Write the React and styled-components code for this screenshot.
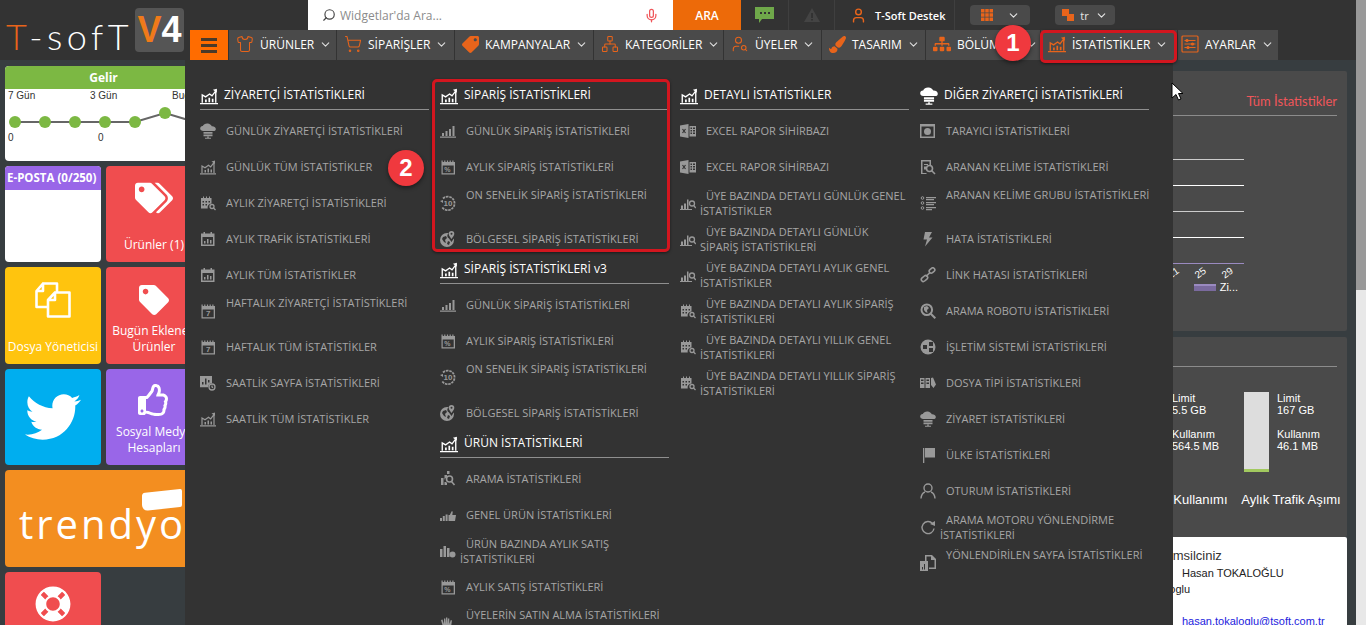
import styled, { createGlobalStyle } from 'styled-components';
import { ChevronDown, Mic, Network, Search, Shirt, ShoppingCart, User, UserSearch } from 'lucide-react';
import { FaLifeRing, FaPaintBrush, FaRegThumbsUp, FaSitemap, FaTag, FaTags, FaTwitter } from 'react-icons/fa';

const Global = createGlobalStyle`
    html, body { margin:0; padding:0; height:100%; overflow:hidden; background:#373d40; }
    body { font-family:"Open Sans", sans-serif; }
    * { box-sizing:border-box; }
`

const Page = styled.div`
    position:relative;
    display:flex;
    width:1366px;
    height:625px;
    overflow:hidden;
`
const Content = styled.div`
    flex:1;
    min-width:0;
    display:flex;
    flex-direction:column;
`
const Scrollbar = styled.div`
    width:10px;
    background:#e8e8e8;
`
const Thumb = styled.div`
    height:290px;
    background:#999;
`

/* header */
const Header = styled.header`
    display:flex;
    height:60px;
    background:#333;
`
const Logo = styled.div`
    width:190px;
    display:flex;
    align-items:center;
    padding:0 0 0 6px;
    gap:5px;
`
const LogoText = styled.span`
    width:124px;
    margin-top:12px;
    font:300 36px/1 Lato, "Open Sans", sans-serif;
    color:#fff;
    letter-spacing:4.5px;
    white-space:nowrap;
    b { font-weight:300; color:#e8641b; }
`
const Version = styled.span`
    width:49px;
    height:44px;
    border-radius:4px;
    background:#555;
    display:flex;
    align-items:center;
    justify-content:center;
    font:700 36px/1 "Liberation Sans", sans-serif;
    color:#fff;
    b { color:#f07a1a; }
`
const HeaderRight = styled.div`
    flex:1;
    display:flex;
    flex-direction:column;
`
const TopBar = styled.div`
    height:30px;
    display:flex;
    align-items:stretch;
    padding-left:118px;
`
const SearchBox = styled.div`
    width:365px;
    background:#fff;
    display:flex;
    align-items:center;
    padding:0 14px 0 14px;
    gap:4px;
    color:#444;
`
const Placeholder = styled.span`
    flex:1;
    font-size:12px;
    color:#8b8b8b;
`
const SearchButton = styled.div`
    width:68px;
    background:#ed6a09;
    color:#fff;
    font-size:12px;
    font-weight:600;
    display:flex;
    align-items:center;
    justify-content:center;
`
const TopCell = styled.div`
    width:${p => p.$w}px;
    border-right:1px solid #3f3f3f;
    display:flex;
    align-items:center;
    justify-content:${p => (p.$pl ? 'flex-start' : 'center')};
    padding-left:${p => p.$pl || 0}px;
    gap:8px;
    color:#fff;
    font-size:11px;
    font-weight:600;
    svg { flex:none; }
`
const TopButton = styled.div`
    width:60px;
    height:20px;
    margin:5px 0 0 ${p => p.$ml}px;
    background:#4a4a4a;
    border-radius:4px;
    display:flex;
    align-items:center;
    justify-content:center;
    gap:${p => p.$gap}px;
    color:#e6e6e6;
    font-size:11px;
`
const Nav = styled.nav`
    height:30px;
    display:flex;
`
const Burger = styled.div`
    width:38px;
    background:#ff6c00;
    display:flex;
    flex-direction:column;
    align-items:center;
    justify-content:center;
    gap:3px;
    i { display:block; width:16px; height:3px; background:#4a3a2a; }
`
const NavItem = styled.div`
    width:${p => p.$w}px;
    flex:none;
    background:#4a4a4a;
    border-left:1px solid #333;
    display:flex;
    align-items:center;
    padding:0 0 2px ${p => p.$pad || 7}px;
    gap:6px;
    color:#fff;
    font-size:12px;
    font-weight:400;
    white-space:nowrap;
    > svg:first-child { color:#e8641b; flex:none; }
    > svg:last-child { color:#ddd; flex:none; margin-left:-1px; }
`
const NavChart = styled.span`
    color:#e8641b;
    flex:none;
`

/* body */
const Body = styled.div`
    flex:1;
    display:flex;
    min-height:0;
`
const Sidebar = styled.aside`
    width:186px;
    flex:none;
    padding:6px 0 0 5px;
    display:grid;
    grid-template-columns:96px 96px;
    grid-auto-rows:min-content;
    column-gap:5px;
    row-gap:5px;
`
const Tile = styled.div`
    grid-column:span ${p => p.$span || 1};
    height:${p => p.$h || 96.4}px;
    background:${p => p.$bg};
    border-radius:4px;
    color:#fff;
    overflow:hidden;
    position:relative;
    display:flex;
    flex-direction:column;
    align-items:center;
    font-size:12px;
    line-height:16px;
    text-align:center;
`
/* icon and label share one grid cell: the icon hangs from the top, the label sits on the bottom */
const IconTile = styled(Tile)`
    display:grid;
    justify-items:center;
    > * { grid-area:1 / 1; }
`
const TileIcon = styled.div`
    align-self:start;
    height:${p => p.$h || 64}px;
    display:flex;
    align-items:center;
    justify-content:center;
`
const TileLabel = styled.div`
    align-self:end;
    padding:0 2px 9px;
    white-space:nowrap;
`
const TileHead = styled.div`
    align-self:stretch;
    height:${p => p.$h}px;
    flex:none;
    background:${p => p.$bg};
    color:#fff;
    font-size:${p => p.$size}px;
    font-weight:700;
    display:flex;
    align-items:center;
    justify-content:${p => p.$justify || 'center'};
    padding-left:${p => p.$pl || 0}px;
    white-space:nowrap;
`
const IncomeLabels = styled.div`
    align-self:stretch;
    display:grid;
    grid-template-columns:82px 82px 30px;
    padding:0 0 0 3px;
    color:#333;
    font:10px/14px "Liberation Sans", sans-serif;
    text-align:left;
`
const IncomeZeros = styled(IncomeLabels)`
    grid-template-columns:90px 30px;
`
const IncomeSvg = styled.svg`
    align-self:flex-start;
    flex:none;
    margin-left:-5px;
`
const Wordmark = styled.div`
    flex:1;
    align-self:stretch;
    display:flex;
    align-items:center;
    padding:12px 0 0 14px;
    font:400 40px/1 "Open Sans", sans-serif;
    letter-spacing:3px;
    white-space:nowrap;
`
const WordmarkFlag = styled.span`
    position:absolute;
    left:137px;
    top:21px;
    width:40px;
    height:18px;
    background:#fff;
    border-radius:3px 2px 2px 6px;
    transform:skewY(-6deg);
`

const Main = styled.main`
    flex:1;
    min-width:0;
    padding:11px 9px 0 0;
    display:flex;
    flex-direction:column;
    gap:6px;
    overflow:hidden;
    color:#fff;
`
const Panel = styled.section`
    height:${p => p.$h}px;
    flex:none;
    background:#4a4a4a;
    border-radius:2px;
    padding:0 10px;
    display:flex;
    flex-direction:column;
`
const PanelHead = styled.div`
    height:${p => p.$h}px;
    flex:none;
    border-bottom:1px solid #8c8c8c;
    display:flex;
    align-items:flex-end;
    justify-content:flex-end;
    padding-bottom:6px;
    color:#f0565a;
    font:400 13px/16px Lato, "Open Sans", sans-serif;
`
const Chart = styled.div`
    margin:18px 93px 0 auto;
    width:500px;
`
const GridLine = styled.div`
    height:26px;
    border-bottom:1px solid ${p => p.$c};
`
const AxisLabels = styled.div`
    display:flex;
    justify-content:flex-end;
    padding:3px 3px 0 0;
    span {
        width:27px;
        text-align:center;
        font:10px/12px "Liberation Sans", sans-serif;
        transform:rotate(-35deg);
    }
`
const Legend = styled.div`
    display:flex;
    justify-content:flex-end;
    align-items:center;
    gap:4px;
    padding:1px 6px 0 0;
    font:11px/14px "Liberation Sans", sans-serif;
`
const Swatch = styled.i`
    width:22px;
    height:7px;
    background:#7a6a9e;
    border-top:2px solid #9a8ac0;
`
const Gauges = styled.div`
    display:flex;
    justify-content:flex-end;
    gap:5px;
    padding:25px 0 0;
    margin-right:-4px;
`
const Gauge = styled.div`
    width:100px;
    flex:none;
`
const GaugeRow = styled.div`
    display:flex;
    gap:8px;
    padding-left:3px;
`
const Bar = styled.div`
    width:25px;
    height:80px;
    background:#ddd;
    border-bottom:3px solid #a2c95f;
`
const Facts = styled.div`
    font:400 11px/12px "Liberation Sans", sans-serif;
    color:#fff;
    white-space:nowrap;
    p { margin:0 0 12px; }
`
const GaugeTitle = styled.div`
    margin-top:20px;
    text-align:center;
    white-space:nowrap;
    font:13px/16px "Liberation Sans", sans-serif;
`
const Card = styled.section`
    flex:1;
    margin-top:-6px;
    background:#fff;
    border-radius:2px 2px 0 0;
    padding-top:11px;
    color:#222;
    font:11px/16px "Liberation Sans", sans-serif;
    white-space:nowrap;
`
const CardLine = styled.div`
    padding-left:${p => p.$indent}px;
    height:${p => (p.$size ? 17 : 16)}px;
    font-size:${p => p.$size || 11}px;
    color:${p => p.$color || '#222'};
`

/* dropdown */
const Dropdown = styled.div`
    position:absolute;
    left:185px;
    top:60px;
    width:988px;
    height:565px;
    background:#333;
    padding:23px 0 0 15px;
    display:grid;
    grid-template-columns:repeat(4, 240px);
    overflow:hidden;
`
const Column = styled.div`
    width:229px;
`
const SectionTitle = styled.div`
    height:27px;
    border-bottom:1px solid #8f8f8f;
    margin-bottom:3px;
    display:flex;
    align-items:flex-start;
    gap:6px;
    padding-top:3px;
    color:#fff;
    font-size:12px;
    line-height:18px;
    white-space:nowrap;
    svg { flex:none; margin-top:1px; }
`
const Item = styled.div`
    height:36px;
    display:flex;
    align-items:center;
    color:#a6a6a6;
    font-size:11px;
    line-height:15px;
`
const ItemIcon = styled.div`
    width:20px;
    flex:none;
    display:flex;
    color:#999;
`
const ItemText = styled.div`
    flex:1;
    text-indent:6px;
    white-space:${p => (p.$raised ? 'nowrap' : 'normal')};
    padding-bottom:${p => (p.$raised ? 17 : p.$wrapped ? 0 : 2)}px;
`
const Highlight = styled.div`
    position:absolute;
    left:${p => p.$x}px;
    top:${p => p.$y}px;
    width:${p => p.$w}px;
    height:${p => p.$h}px;
    border:3px solid #d3161f;
    border-radius:5px;
    box-shadow:0 1px 3px rgba(0,0,0,.5);
`
const Badge = styled.div`
    position:absolute;
    left:${p => p.$x - 18}px;
    top:${p => p.$y - 18}px;
    width:36px;
    height:36px;
    border-radius:50%;
    background:#f0393e;
    box-shadow:0 2px 4px rgba(0,0,0,.45);
    color:#fff;
    font:700 24px/36px "Liberation Sans", sans-serif;
    text-align:center;
`
const Cursor = styled.svg`
    position:absolute;
    left:1171px;
    top:82px;
`

const Glyph = styled.svg`
    display:block;
    width:${p => p.$w || 16}px;
    height:${p => p.$h || 16}px;
    fill:currentColor;
    text { font:700 8px "Liberation Sans", sans-serif; }
`
const Outline = (props) => <g fill="none" stroke="currentColor" strokeWidth="1.3" {...props} />

const calendarFrame = 'M1.500 3V1.500h1.200V3h1.500V1.500h1.200V3h1.500V1.500h1.200V3h1.500V1.500h1.200V3h1.500V1.500h1.200V3H15v12.500H1.500zm1.200 3.500V14.300h11V6.500z'

const icons = {
    chart: <><path d="M0 14.200h16v1.200H0zM4.500 11H6v2.500H4.500zm3-1.500H9v4H7.500zm3 1H12v3h-1.500z" /><Outline strokeWidth="1.200"><path d="M2 14V7l3 1.800 3.500-2.600 2.200 1.700 3.300-4.400V14" /></Outline><path d="M11.500 2.500l3.500-1v3.500z" /></>,
    cloud: <><path d="M3 8C.8 7.800 0 6.500.2 5.100.5 3.700 1.600 3 2.800 3.100 3.500 1.300 5.500.3 7.600.5c2 .2 3.600 1.300 4.200 2.700 2-.2 3.800.9 4 2.500.2 1.400-.8 2.300-2.400 2.300z" /><path d="M3.500 9h9v1.800h-9zm0 2.400h9v1.800h-9zM7.300 13.500h1.400v1.200H11v1H5v-1h2.300z" /></>,
    calSearch: <><path fillRule="evenodd" d="M1 3h2V1.500h1V3h2V1.500h1V3h2V1.500h1V3h1.500v5.500a4 4 0 0 0-3.800 5H1zm1.500 3v1.500H4V6zm3 0v1.500H7V6zm3 0v1.500H10V6zm-6 3v1.500H4V9zm3 0v1.500H7V9z" /><Outline><circle cx="12" cy="11.500" r="2" /><path d="M13.500 13l2 2" /></Outline></>,
    calChart: <path fillRule="evenodd" d="M1 2.500h2.500V1H5v1.500h5.500V1H12v1.500h2.500V15H1zm1.500 3.500v7.500H13V6zM4 10h1.500v2.500H4zm3-2h1.500v4.500H7zm3 1h1.500v3.500H10z" />,
    cal7: <><path fillRule="evenodd" d={calendarFrame} /><text x="6" y="13.400">7</text></>,
    calPercent: <><path fillRule="evenodd" d={calendarFrame} /><text x="4.300" y="13.400" style={{ fontSize: 7 }}>%</text></>,
    clockChart: <><path fillRule="evenodd" d="M0 1h12v7.200a4 4 0 0 0-3.800 4H0zm2 8.500h1.500V7H2zm3 0h1.500V3.500H5zm3-2h1.500V5H8z" /><Outline><circle cx="12" cy="12" r="3" /><path d="M12 10.500V12l1 .8" /></Outline></>,
    bars: <path d="M0 13.500h16v1.200H0zM2 10h2v3H2zm3.500-2h2v5h-2zM9 6h2v7H9zm3.500-3h2v10h-2z" />,
    ten: <><Outline strokeWidth="1.800" strokeDasharray="2.500 .8"><path d="M3 3.500A6.800 6.800 0 1 1 2 12" /></Outline><path d="M0 6l3-1v3z" /><text x="3.600" y="10.800">10</text></>,
    globePin: <><path fillRule="evenodd" d="M7 2a7 7 0 1 0 7 7c0-.5 0-1-.2-1.400L11.500 11 9 7.500A3 3 0 0 1 8.700 2.200 7 7 0 0 0 7 2zM3 6l3-1 1 2-2 2 1 3-2-1-2-3zm5 4l2 1-1 3-2-1z" /><path fillRule="evenodd" d="M11.500 0A2.800 2.800 0 0 0 8.700 2.800c0 2 2.800 5.200 2.800 5.200s2.800-3.200 2.800-5.200A2.800 2.800 0 0 0 11.500 0zm0 1.800a1 1 0 1 1 0 2 1 1 0 0 1 0-2z" /></>,
    searchBars: <><path d="M1 7h2.500v7H1zm3.500-3H7v2a4 4 0 0 0-2.500 3zM7 0h2.500v3H7z" /><Outline strokeWidth="1.600"><circle cx="9.500" cy="8" r="3" /><path d="M11.500 10.500l3 3.500" /></Outline><path d="M4.500 11H6l1 1v2H4.500z" /></>,
    thumbBars: <path d="M0 11h2v3H0zm2.800-2h2v5h-2zm2.800-1.500h2V14h-2zM8.500 8h1.300l1.700-3.500c.8-.5 1.300 0 1.200 1L12.300 8H16l-1 6H8.500z" />,
    barsTag: <><path d="M0 6h2.500v8H0zm3.500-3h2.500v11H3.500zM7 5h2.500v9H7z" /><circle cx="12.500" cy="11.500" r="3" /></>,
    hand: <path d="M1 5l1.500-.5L4 9V3.500h1.300L6 9V2.500h1.300L8 9V3.500h1.300V9l1.500-4 1.200.5-1 6.500-1 4H4.500L3 12z" />,
    excel: <><path d="M0 2.500L8.500 1v14L0 13.500z" /><path fill="none" stroke="#333" strokeWidth="1.200" d="M2.500 6l3 4m0-4l-3 4" /><path d="M9.500 3H16v10.500H9.500zm1 1.500v1.500H12V4.500zm2.500 0v1.500h2V4.500zm-2.500 2.500v1.500H12V7zm2.500 0v1.500h2V7zm-2.500 2.500V11H12V9.500zm2.500 0V11h2V9.500z" fillRule="evenodd" /></>,
    barsSearch: <><path d="M0 14h12v1H0zM1 10.500h2V14H1zm3-2h2V14H4zm3-4h1.500V14H7z" /><Outline><circle cx="12" cy="8.500" r="2.500" /><path d="M13.800 10.500l2 2.500" /></Outline></>,
    browser: <><path fillRule="evenodd" d="M0 1h15v14H0zm1.500 2.500v10h12v-10z" /><circle cx="7.500" cy="8.500" r="3.500" /></>,
    docSearch: <><path d="M1 1h10v5H9.500V2.500h-7V14h4v1H1z" /><path d="M4 5h4v1H4zm0 2.500h2v3H4z" /><Outline strokeWidth="1.600"><circle cx="9.500" cy="9.500" r="3" /><path d="M11.500 11.500l3.500 3.500" /></Outline></>,
    list: <><Outline strokeWidth="1"><circle cx="2.500" cy="3" r="1.300" /><circle cx="2.500" cy="8" r="1.300" /><circle cx="2.500" cy="13" r="1.300" /></Outline><path d="M6 2h10v1.200H6zm0 2h8v1.200H6zm0 3h10v1.200H6zm0 2h8v1.200H6zm0 3h10v1.200H6zm0 2h6v1.200H6z" /></>,
    bolt: <path d="M5 1h7L9 6.500h3.500L5 15.500 7 8.500H3.500z" />,
    link: <Outline strokeWidth="1.600"><rect x="9" y="1.500" width="6" height="4" rx="2" transform="rotate(-40 12 3.500)" /><rect x="1" y="9.500" width="7" height="4" rx="2" transform="rotate(-40 4.500 11.500)" /><path d="M6 9.500l4-4" /></Outline>,
    globeSearch: <><Outline strokeWidth="2"><circle cx="6.800" cy="6.800" r="5.300" /><path d="M10.800 10.800l4.500 4.500" /></Outline><path d="M4 4l3-1 2 2-2 2 .5 3-2-1-1.500-2z" /></>,
    os: <><circle cx="8" cy="8" r="7.500" /><path fill="#333" d="M3 6h4v4H3zm6-3h4v4H9zm0 6h4v4H9z" /></>,
    fileTypes: <path fillRule="evenodd" d="M0 3h4.500v10H0zm1 1.500v1.500h2.500V4.500zm0 3V9h2.500V7.500zM5.500 3H10v10H5.500zm1 1.500v1.500H9V4.500zm0 3V9H9V7.500zM11 3l2-.5 3 7-2.500 3.500L11 10z" />,
    flag: <path d="M3 1h1.300v15H3zm2 0h10v9.500H5z" />,
    user: <Outline strokeWidth="1.400"><circle cx="8" cy="5" r="4" /><path d="M1 15.500c.3-3.500 2.500-6 4-6.500m10 6.500c-.3-3.500-2.500-6-4-6.500" /></Outline>,
    refresh: <><Outline strokeWidth="1.400"><path d="M12.500 4.500a6 6 0 1 0 1.500 5" /></Outline><path d="M10 5l5-3v5z" /></>,
    docChart: <><path fillRule="evenodd" d="M5 0h7l4 4v10H9v-1.500h5.500V5H11V1.500H6.500V7H5z" /><path d="M0 6h8v10H0z" /><path fill="#333" d="M2 12h1v2.500H2zm2-3h1v5.500H4z" /></>,
}

function Icon({ name, w, h }) {
    return <Glyph viewBox="0 0 16 16" $w={w} $h={h}>{icons[name]}</Glyph>
}

const orderItems = [
    ['bars', 'GÜNLÜK SİPARİŞ İSTATİSTİKLERİ'],
    ['calPercent', 'AYLIK SİPARİŞ İSTATİSTİKLERİ'],
    ['ten', 'ON SENELİK SİPARİŞ İSTATİSTİKLERİ', true],
    ['globePin', 'BÖLGESEL SİPARİŞ İSTATİSTİKLERİ'],
]

const menu = [
    [
        { icon: 'chart', title: 'ZİYARETÇİ İSTATİSTİKLERİ', items: [
            ['cloud', 'GÜNLÜK ZİYARETÇİ İSTATİSTİKLERİ'],
            ['chart', 'GÜNLÜK TÜM İSTATİSTİKLER'],
            ['calSearch', 'AYLIK ZİYARETÇİ İSTATİSTİKLERİ'],
            ['calChart', 'AYLIK TRAFİK İSTATİSTİKLERİ'],
            ['calChart', 'AYLIK TÜM İSTATİSTİKLER'],
            ['cal7', 'HAFTALIK ZİYARETÇİ İSTATİSTİKLERİ', true],
            ['cal7', 'HAFTALIK TÜM İSTATİSTİKLER'],
            ['clockChart', 'SAATLİK SAYFA İSTATİSTİKLERİ'],
            ['chart', 'SAATLİK TÜM İSTATİSTİKLER'],
        ] },
    ],
    [
        { icon: 'chart', title: 'SİPARİŞ İSTATİSTİKLERİ', items: orderItems },
        { icon: 'chart', title: 'SİPARİŞ İSTATİSTİKLERİ v3', items: orderItems },
        { icon: 'chart', title: 'ÜRÜN İSTATİSTİKLERİ', items: [
            ['searchBars', 'ARAMA İSTATİSTİKLERİ'],
            ['thumbBars', 'GENEL ÜRÜN İSTATİSTİKLERİ'],
            ['barsTag', 'ÜRÜN BAZINDA AYLIK SATIŞ İSTATİSTİKLERİ'],
            ['calPercent', 'AYLIK SATIŞ İSTATİSTİKLERİ'],
            ['hand', 'ÜYELERİN SATIN ALMA İSTATİSTİKLERİ', true],
        ] },
    ],
    [
        { icon: 'chart', title: 'DETAYLI İSTATİSTİKLER', items: [
            ['excel', 'EXCEL RAPOR SİHİRBAZI'],
            ['excel', 'EXCEL RAPOR SİHİRBAZI'],
            ['barsSearch', 'ÜYE BAZINDA DETAYLI GÜNLÜK GENEL İSTATİSTİKLER'],
            ['barsSearch', 'ÜYE BAZINDA DETAYLI GÜNLÜK SİPARİŞ İSTATİSTİKLERİ'],
            ['barsSearch', 'ÜYE BAZINDA DETAYLI AYLIK GENEL İSTATİSTİKLER'],
            ['calSearch', 'ÜYE BAZINDA DETAYLI AYLIK SİPARİŞ İSTATİSTİKLERİ'],
            ['calSearch', 'ÜYE BAZINDA DETAYLI YILLIK GENEL İSTATİSTİKLERİ'],
            ['calSearch', 'ÜYE BAZINDA DETAYLI YILLIK SİPARİŞ İSTATİSTİKLERİ'],
        ] },
    ],
    [
        { icon: 'cloud', title: 'DİĞER ZİYARETÇİ İSTATİSTİKLERİ', items: [
            ['browser', 'TARAYICI İSTATİSTİKLERİ'],
            ['docSearch', 'ARANAN KELİME İSTATİSTİKLERİ'],
            ['list', 'ARANAN KELİME GRUBU İSTATİSTİKLERİ', true],
            ['bolt', 'HATA İSTATİSTİKLERİ'],
            ['link', 'LİNK HATASI İSTATİSTİKLERİ'],
            ['globeSearch', 'ARAMA ROBOTU İSTATİSTİKLERİ'],
            ['os', 'İŞLETİM SİSTEMİ İSTATİSTİKLERİ'],
            ['fileTypes', 'DOSYA TİPİ İSTATİSTİKLERİ'],
            ['cloud', 'ZİYARET İSTATİSTİKLERİ'],
            ['flag', 'ÜLKE İSTATİSTİKLERİ'],
            ['user', 'OTURUM İSTATİSTİKLERİ'],
            ['refresh', 'ARAMA MOTORU YÖNLENDİRME İSTATİSTİKLERİ'],
            ['docChart', 'YÖNLENDİRİLEN SAYFA İSTATİSTİKLERİ', true],
        ] },
    ],
]

const chevron = <ChevronDown size={13} strokeWidth={2} />

function IncomeChart() {
    const points = [[15, 19], [45, 19], [75, 19], [105, 19], [135, 19], [165, 10], [195, 19]]
    return (
        <IncomeSvg width="192" height="28" viewBox="0 0 192 28">
            <polyline fill="none" stroke="#666" strokeWidth="2" points={points.map(p => p.join(',')).join(' ')} />
            {points.map(p => <circle key={p[0]} cx={p[0]} cy={p[1]} r="6" fill="#7cb843" />)}
        </IncomeSvg>
    )
}

function SettingsIcon() {
    return (
        <svg width="18" height="18" viewBox="0 0 18 18" fill="none" stroke="currentColor" strokeWidth="1.2">
            <rect x="1" y="1" width="16" height="16" rx="1" />
            <path d="M3.500 5.500h11M3.500 9h11M3.500 12.500h11" />
            <circle cx="6" cy="5.500" r="1" fill="currentColor" />
            <circle cx="11.500" cy="9" r="1" fill="currentColor" />
            <circle cx="7" cy="12.500" r="1" fill="currentColor" />
        </svg>
    )
}

function FilesIcon() {
    return (
        <svg width="36" height="36" viewBox="0 0 36 36" fill="none" stroke="currentColor" strokeWidth="2.6" strokeLinejoin="round">
            <path d="M8 1.500H22V10M13 25H1.500V9L8 1.500V9H1.500" />
            <path d="M20 10.500H34.500V34.500H13V18L20 10.500V18H13" />
        </svg>
    )
}

export default function App() {
    return (
        <Page>
            <Global />
            <Content>
                <Header>
                    <Logo>
                        <LogoText><b>T</b>-sofT</LogoText>
                        <Version><b>V</b>4</Version>
                    </Logo>
                    <HeaderRight>
                        <TopBar>
                            <SearchBox>
                                <Search size={14} style={{ transform: 'scaleX(-1)' }} />
                                <Placeholder>Widgetlar'da Ara...</Placeholder>
                                <Mic size={15} color="#f0565a" />
                            </SearchBox>
                            <SearchButton>ARA</SearchButton>
                            <TopCell $w={48}>
                                <svg width="19" height="17" viewBox="0 0 19 17"><path fill="#6fa84a" d="M0 0h19v12H7l-3 4v-4H0z" /><path fill="#333" d="M5 5h2v2H5zm4 0h2v2H9zm4 0h2v2h-2z" /></svg>
                            </TopCell>
                            <TopCell $w={46}>
                                <svg width="16" height="14" viewBox="0 0 16 14"><path fill="#444" d="M8 0l8 14H0z" /><path fill="#2c2c2c" d="M7.300 5h1.400v5H7.300zm0 6h1.400v1.500H7.300z" /></svg>
                            </TopCell>
                            <TopCell $w={120} $pl={15}>
                                <User size={17} color="#e8641b" />
                                T-Soft Destek
                            </TopCell>
                            <TopButton $ml={15} $gap={14}>
                                <svg width="12" height="12" viewBox="0 0 12 12"><path fill="#e8641b" d="M0 0h3.500v3.500H0zm4.250 0h3.500v3.500h-3.500zm4.250 0H12v3.500H8.500zM0 4.250h3.500v3.500H0zm4.250 0h3.500v3.500h-3.500zm4.250 0H12v3.500H8.500zM0 8.500h3.500V12H0zm4.250 0h3.500V12h-3.500zm4.250 0H12V12H8.500z" /></svg>
                                {chevron}
                            </TopButton>
                            <TopButton $ml={25} $gap={6}>
                                <svg width="12" height="12" viewBox="0 0 12 12"><path fill="#e8641b" d="M0 0h7v7H0zm5 5h7v7H5z" /></svg>
                                tr
                                {chevron}
                            </TopButton>
                        </TopBar>
                        <Nav>
                            <Burger><i /><i /><i /></Burger>
                            <NavItem $w={108}><Shirt size={18} strokeWidth={1.4} />ÜRÜNLER{chevron}</NavItem>
                            <NavItem $w={118}><ShoppingCart size={18} strokeWidth={1.4} />SİPARİŞLER{chevron}</NavItem>
                            <NavItem $w={139}><FaTag size={17} style={{ transform: 'rotate(90deg)' }} />KAMPANYALAR{chevron}</NavItem>
                            <NavItem $w={130}><Network size={18} strokeWidth={1.4} />KATEGORİLER{chevron}</NavItem>
                            <NavItem $w={98}><UserSearch size={18} strokeWidth={1.4} />ÜYELER{chevron}</NavItem>
                            <NavItem $w={104}><FaPaintBrush size={17} />TASARIM{chevron}</NavItem>
                            <NavItem $w={115}><FaSitemap size={18} />BÖLÜMLER{chevron}</NavItem>
                            <NavItem $w={137}><NavChart><Icon name="chart" w={18} h={18} /></NavChart>İSTATİSTİKLER{chevron}</NavItem>
                            <NavItem $w={101} $pad={3}><SettingsIcon />AYARLAR{chevron}</NavItem>
                        </Nav>
                    </HeaderRight>
                </Header>
                <Body>
                    <Sidebar>
                        <Tile $span={2} $bg="#fff" $h={95}>
                            <TileHead $bg="#7cb843" $h={23} $size={12}>Gelir</TileHead>
                            <IncomeLabels><span>7 Gün</span><span>3 Gün</span><span>Bugün</span></IncomeLabels>
                            <IncomeChart />
                            <IncomeZeros><span>0</span><span>0</span></IncomeZeros>
                        </Tile>
                        <Tile $bg="#fff">
                            <TileHead $bg="#9966e8" $h={24} $size={11.5} $justify="flex-start" $pl={2}>E-POSTA (0/250)</TileHead>
                        </Tile>
                        <IconTile $bg="#f04d4f">
                            <TileIcon><FaTags size={38} /></TileIcon>
                            <TileLabel>Ürünler (1)</TileLabel>
                        </IconTile>
                        <IconTile $bg="#ffc40e">
                            <TileIcon $h={66}><FilesIcon /></TileIcon>
                            <TileLabel>Dosya Yöneticisi</TileLabel>
                        </IconTile>
                        <IconTile $bg="#f04d4f">
                            <TileIcon $h={66}><FaTag size={30} /></TileIcon>
                            <TileLabel>Bugün Eklenen<br />Ürünler</TileLabel>
                        </IconTile>
                        <IconTile $bg="#00aeef">
                            <TileIcon $h={96}><FaTwitter size={56} /></TileIcon>
                        </IconTile>
                        <IconTile $bg="#9966e8">
                            <TileIcon $h={62}><FaRegThumbsUp size={32} /></TileIcon>
                            <TileLabel>Sosyal Medya<br />Hesapları</TileLabel>
                        </IconTile>
                        <Tile $span={2} $bg="#f38e20">
                            <WordmarkFlag />
                            <Wordmark>trendyol</Wordmark>
                        </Tile>
                        <IconTile $bg="#f04d4f">
                            <TileIcon><FaLifeRing size={36} /></TileIcon>
                        </IconTile>
                    </Sidebar>
                    <Main>
                        <Panel $h={260}>
                            <PanelHead $h={45}>Tüm İstatistikler</PanelHead>
                            <Chart>
                                <GridLine $c="#ccc" />
                                <GridLine $c="#fff" />
                                <GridLine $c="#ccc" />
                                <GridLine $c="#fff" />
                                <GridLine $c="#9a8ac0" />
                                <AxisLabels><span>21</span><span>25</span><span>29</span></AxisLabels>
                                <Legend><Swatch />Zi...</Legend>
                            </Chart>
                        </Panel>
                        <Panel $h={200}>
                            <PanelHead $h={30} />
                            <Gauges>
                                <Gauge>
                                    <GaugeRow>
                                        <Bar />
                                        <Facts><p>Limit<br />5.5 GB</p><p>Kullanım<br />564.5 MB</p></Facts>
                                    </GaugeRow>
                                    <GaugeTitle>Disk Kullanımı</GaugeTitle>
                                </Gauge>
                                <Gauge>
                                    <GaugeRow>
                                        <Bar />
                                        <Facts><p>Limit<br />167 GB</p><p>Kullanım<br />46.1 MB</p></Facts>
                                    </GaugeRow>
                                    <GaugeTitle>Aylık Trafik Aşımı</GaugeTitle>
                                </Gauge>
                            </Gauges>
                        </Panel>
                        <Card>
                            <CardLine $indent={973} $size={13} $color="#333">Temsilciniz</CardLine>
                            <CardLine $indent={996}>Hasan TOKALOĞLU</CardLine>
                            <CardLine $indent={954}>htokaloglu</CardLine>
                            <CardLine $indent={996} />
                            <CardLine $indent={996} $color="#2222dd">hasan.tokaloglu@tsoft.com.tr</CardLine>
                        </Card>
                    </Main>
                </Body>
            </Content>
            <Scrollbar><Thumb /></Scrollbar>

            <Dropdown>
                {menu.map((column, i) => (
                    <Column key={i}>
                        {column.map(section => (
                            <div key={section.title}>
                                <SectionTitle><Icon name={section.icon} w={18} h={18} />{section.title}</SectionTitle>
                                {section.items.map(([icon, label, raised], n) => (
                                    <Item key={n}>
                                        <ItemIcon><Icon name={icon} /></ItemIcon>
                                        <ItemText $raised={raised} $wrapped={label.length > 34}>{label}</ItemText>
                                    </Item>
                                ))}
                            </div>
                        ))}
                    </Column>
                ))}
            </Dropdown>

            <Highlight $x={1040} $y={30} $w={137} $h={33} />
            <Highlight $x={432} $y={79} $w={238} $h={173} />
            <Badge $x={1013} $y={43}>1</Badge>
            <Badge $x={406} $y={168}>2</Badge>
            <Cursor width="12" height="19" viewBox="0 0 12 19"><path d="M1 1v15l4-3.500 2.500 5.500 2.500-1-2.500-5.500H12z" fill="#fff" stroke="#000" /></Cursor>
        </Page>
    )
}
